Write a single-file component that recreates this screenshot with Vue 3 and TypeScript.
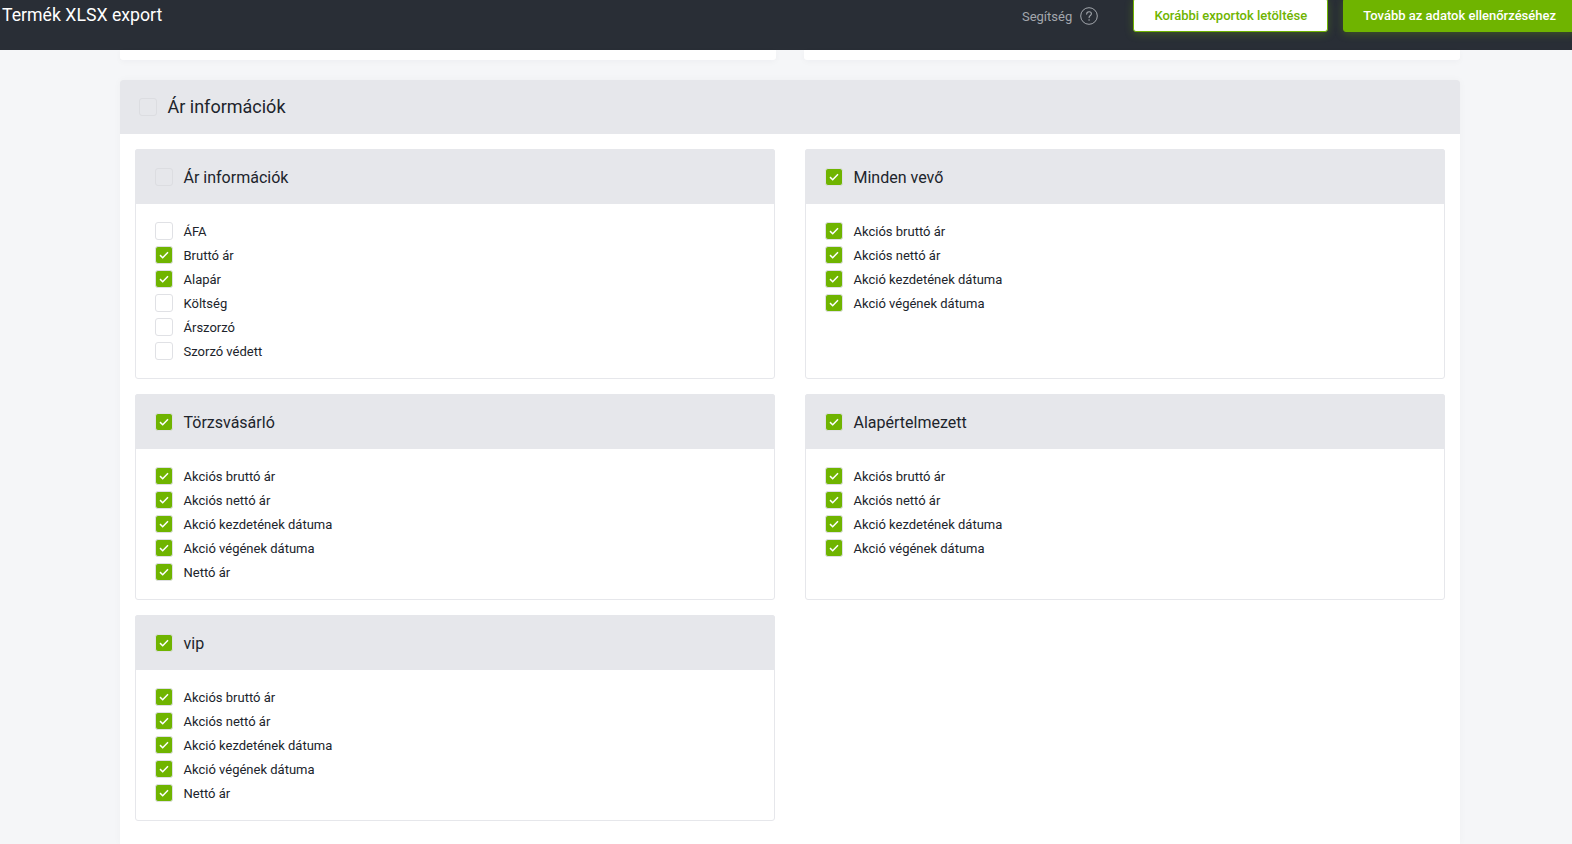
<script setup lang="ts">
interface Item { label: string; checked: boolean }
interface Group { title: string; checked: boolean; items: Item[] }

const akcio = (): Item[] => [
  { label: 'Akciós bruttó ár', checked: true },
  { label: 'Akciós nettó ár', checked: true },
  { label: 'Akció kezdetének dátuma', checked: true },
  { label: 'Akció végének dátuma', checked: true },
]

const groups: Group[] = [
  {
    title: 'Ár információk',
    checked: false,
    items: [
      { label: 'ÁFA', checked: false },
      { label: 'Bruttó ár', checked: true },
      { label: 'Alapár', checked: true },
      { label: 'Költség', checked: false },
      { label: 'Árszorzó', checked: false },
      { label: 'Szorzó védett', checked: false },
    ],
  },
  { title: 'Minden vevő', checked: true, items: akcio() },
  { title: 'Törzsvásárló', checked: true, items: [...akcio(), { label: 'Nettó ár', checked: true }] },
  { title: 'Alapértelmezett', checked: true, items: akcio() },
  { title: 'vip', checked: true, items: [...akcio(), { label: 'Nettó ár', checked: true }] },
]
</script>

<template>
  <div class="page">
    <header class="topbar">
      <div class="title">Termék XLSX export</div>
      <div class="actions">
        <span class="help">Segítség</span>
        <svg class="help-icon" width="18" height="18" viewBox="0 0 18 18" fill="none">
          <circle cx="9" cy="9" r="8.3" stroke="#a3a7ad" stroke-width="1" />
          <path d="M6.7 7.1c0-1.4 1-2.3 2.4-2.3 1.3 0 2.3.8 2.3 2 0 1-.5 1.5-1.3 2-.7.5-1 .9-1 1.8" stroke="#a3a7ad" stroke-width="1.1" stroke-linecap="round" />
          <circle cx="9.05" cy="13" r=".75" fill="#a3a7ad" />
        </svg>
        <button class="btn btn-outline">Korábbi exportok letöltése</button>
        <button class="btn btn-primary">Tovább az adatok ellenőrzéséhez</button>
      </div>
    </header>

    <main class="content">
      <div class="remnants">
        <div class="remnant"></div>
        <div class="remnant"></div>
      </div>

      <section class="section">
        <div class="section-head">
          <span class="box box-head"></span>
          <h2>Ár információk</h2>
        </div>
        <div class="grid">
          <article v-for="g in groups" :key="g.title" class="card">
            <div class="card-head">
              <span class="box box-head" :class="{ on: g.checked }">
                <svg v-if="g.checked" width="10" height="8" viewBox="0 0 10 8" fill="none">
                  <path d="M1 4.1 3.7 6.7 9 1.2" stroke="#fff" stroke-width="1.5" />
                </svg>
              </span>
              <h3>{{ g.title }}</h3>
            </div>
            <ul class="items">
              <li v-for="it in g.items" :key="it.label" class="item">
                <span class="box" :class="{ on: it.checked }">
                  <svg v-if="it.checked" width="10" height="8" viewBox="0 0 10 8" fill="none">
                    <path d="M1 4.1 3.7 6.7 9 1.2" stroke="#fff" stroke-width="1.5" />
                  </svg>
                </span>
                <span>{{ it.label }}</span>
              </li>
            </ul>
          </article>
        </div>
      </section>
    </main>
  </div>
</template>

<style>
html, body { margin: 0; overflow: hidden; }
</style>

<style scoped>
.page {
  height: 844px;
  overflow: hidden;
  display: flex;
  flex-direction: column;
  background: #f5f6f8;
  font-family: Roboto, "Liberation Sans", sans-serif;
  color: #20242b;
}
.topbar {
  flex: none;
  height: 50px;
  background: #292e36;
  display: flex;
  justify-content: space-between;
  align-items: flex-start;
  padding-left: 2px;
  overflow: hidden;
}
.title {
  color: #fff;
  font-size: 17.7px;
  line-height: 30px;
}
.actions {
  display: flex;
  align-items: center;
  height: 32px;
  flex: none;
  margin-right: -5px;
}
.help {
  color: #a3a7ad;
  font-size: 13px;
  margin-right: 8px;
}
.help-icon { margin-right: 35px; }
.btn {
  height: 34px;
  margin-top: -2px;
  border-radius: 3px;
  font-family: inherit;
  font-size: 13px;
  font-weight: 500;
  border: 1px solid #6fb400;
  box-shadow: 0 2px 8px rgba(111, 180, 0, .3);
}
.btn-outline {
  width: 195px;
  padding: 0;
  background: #fff;
  color: #6fb400;
  margin-right: 15px;
}
.btn-primary {
  padding: 0 20px 0 19px;
  background: #6fb400;
  color: #fff;
  white-space: nowrap;
}
.content {
  flex: 1;
  display: flex;
  flex-direction: column;
  width: 1340px;
  margin-left: 120px;
}
.remnants {
  flex: none;
  display: grid;
  grid-template-columns: 656px 656px;
  justify-content: space-between;
  margin-bottom: 20px;
}
.remnant {
  height: 10px;
  background: #fff;
  border-radius: 0 0 3px 3px;
  box-shadow: 0 2px 6px rgba(30, 40, 60, .03);
}
.section {
  flex: 1;
  background: #fff;
  border-radius: 3px 3px 0 0;
  box-shadow: 0 0 8px rgba(30, 40, 60, .03);
}
.section-head {
  height: 54px;
  background: #e6e7eb;
  border-radius: 3px 3px 0 0;
  display: flex;
  align-items: center;
  padding-left: 19px;
  gap: 10.5px;
}
h2 {
  margin: 0 0 1px;
  font-size: 18px;
  font-weight: 400;
}
.grid {
  display: grid;
  grid-template-columns: 640px 640px;
  column-gap: 30px;
  row-gap: 15px;
  padding: 15px;
}
.card {
  border: 1px solid #e6e7eb;
  border-radius: 3px;
  background: #fff;
}
.card-head {
  height: 55px;
  margin: -1px -1px 0;
  background: #e6e7eb;
  border-radius: 3px 3px 0 0;
  display: flex;
  align-items: center;
  padding-left: 20px;
  gap: 10.5px;
}
h3 {
  margin: 1px 0 0;
  font-size: 16px;
  font-weight: 400;
}
.items {
  list-style: none;
  margin: 0;
  padding: 15px 0 15px 19px;
}
.item {
  height: 24px;
  display: flex;
  align-items: center;
  gap: 10.5px;
  font-size: 13px;
}
.box {
  width: 18px;
  height: 18px;
  box-sizing: border-box;
  flex: none;
  border: 1px solid #e0e1e5;
  border-radius: 3px;
  background: #fff;
  display: flex;
  align-items: center;
  justify-content: center;
}
.box-head { background: #e6e7eb; border-color: #dcdde1; }
.box.on { background: #6fb400; border-color: #dfe0e3; }
</style>
